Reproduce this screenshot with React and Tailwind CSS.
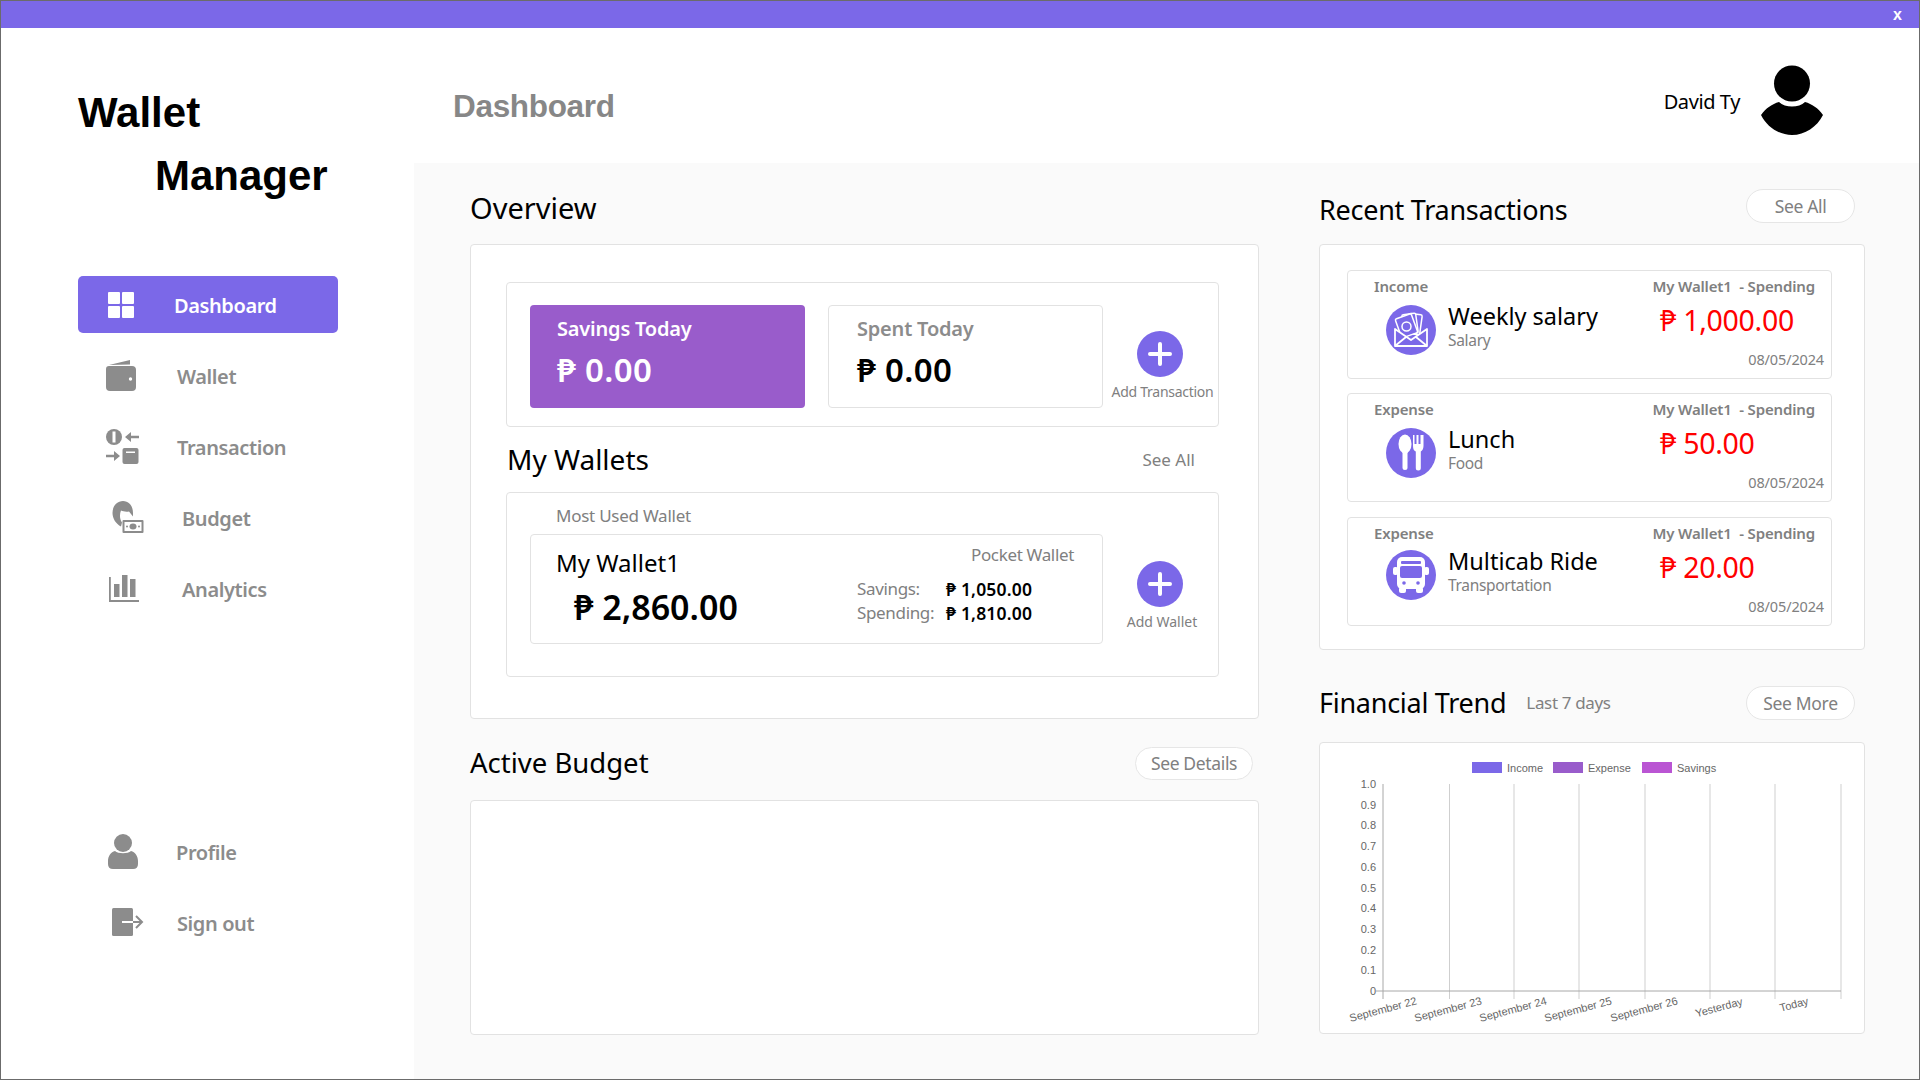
const ACCENT = 'bg-[#7b68e8]';

function GridIcon() {
  return (
    <svg width="26" height="26" viewBox="0 0 26 26" fill="#fff">
      <rect x="0" y="0" width="12" height="12" rx="1" />
      <rect x="14" y="0" width="12" height="12" rx="1" />
      <rect x="0" y="14" width="12" height="12" rx="1" />
      <rect x="14" y="14" width="12" height="12" rx="1" />
    </svg>
  );
}

function WalletIcon() {
  return (
    <svg width="30" height="31" viewBox="0 0 30 31" fill="#8c8c8c">
      <path d="M3 5 L24 0 L24 4.500 Z" />
      <path d="M3 6 H26 Q30 6 30 10 V27 Q30 31 26 31 H4 Q0 31 0 27 V9 Q0 6 3 6 Z" />
      <circle cx="24.500" cy="19" r="1.700" fill="#fff" />
    </svg>
  );
}

function TransactionIcon() {
  return (
    <svg width="33" height="35" viewBox="0 0 33 35" fill="#8c8c8c">
      <circle cx="8" cy="8" r="8" />
      <rect x="6.500" y="2.500" width="3" height="11" fill="#fff" />
      <path d="M19 8 L25 3 V6.800 H33 V9.200 H25 V13 Z" />
      <path d="M14 27 L8 22 V25.800 H0 V28.200 H8 V32 Z" />
      <rect x="16.500" y="19" width="16" height="16" rx="2" />
      <rect x="20" y="22.500" width="9" height="1.500" fill="#fff" />
    </svg>
  );
}

function BudgetIcon() {
  return (
    <svg width="32" height="33" viewBox="0 0 32 33" fill="#8c8c8c">
      <path d="M0.500 12 C0.500 5 5 0 11 0 C17 0 21 5 21 12 V15.500 L17 10.500 C14 11 11 10.500 9 9.500 C7.500 13 7.500 18 10 21.500 L9 25.500 C4 23 0.500 17.500 0.500 12 Z" />
      <rect x="10.500" y="19" width="21" height="13" rx="1" />
      <rect x="12.500" y="21" width="17" height="9" fill="#fff" />
      <ellipse cx="21" cy="25.500" rx="3.500" ry="3" />
      <circle cx="15" cy="25.500" r="1" />
      <circle cx="27" cy="25.500" r="1" />
    </svg>
  );
}

function AnalyticsIcon() {
  return (
    <svg width="30" height="27" viewBox="0 0 30 27" fill="#8c8c8c">
      <rect x="0" y="2" width="1.800" height="25" />
      <rect x="0" y="25" width="30" height="2" />
      <rect x="5" y="9" width="5.500" height="13" />
      <rect x="13" y="0" width="5.500" height="22" />
      <rect x="21" y="4" width="5.500" height="18" />
    </svg>
  );
}

function ProfileIcon() {
  return (
    <svg width="30" height="35" viewBox="0 0 30 35" fill="#8c8c8c">
      <circle cx="15" cy="9" r="9" />
      <path d="M7 17 C10 20 20 20 23 17 C27 18 30 22 30 27 V30 Q30 35 25 35 H5 Q0 35 0 30 V27 C0 22 3 18 7 17 Z" />
    </svg>
  );
}

function SignOutIcon() {
  return (
    <svg width="32" height="29" viewBox="0 0 32 29" fill="none">
      <rect x="0" y="0" width="21" height="28" rx="1.500" fill="#8c8c8c" />
      <path d="M10 14 H21" stroke="#fff" strokeWidth="2" />
      <path d="M21 14 H30 M24 8 L30 14 L24 20" stroke="#8c8c8c" strokeWidth="2" />
    </svg>
  );
}

function Avatar() {
  return (
    <svg width="62" height="70" viewBox="0 0 62 70" fill="#000">
      <circle cx="31" cy="18.500" r="18" />
      <path d="M18 37 C24 43 38 43 44 37 C51 39 57 43 62 50 C56 62 44 70 31 70 C18 70 6 62 0 50 C5 43 11 39 18 37 Z" />
    </svg>
  );
}

function SalaryIcon() {
  return (
    <svg width="50" height="50" viewBox="0 0 50 50" fill="none" stroke="#fff" strokeWidth="1.500" strokeLinejoin="round">
      <rect x="22" y="9" width="13" height="20" rx="1.500" transform="rotate(8 28 19)" />
      <rect x="17" y="9" width="14" height="20" rx="1.500" transform="rotate(-8 24 19)" fill="#7b68e8" />
      <rect x="12" y="11" width="17" height="20" rx="1.500" transform="rotate(-20 20 21)" fill="#7b68e8" />
      <circle cx="20.500" cy="21.500" r="4.500" />
      <path d="M9 24 L25 35 L41 24 V40 H9 Z" fill="#7b68e8" stroke="none" />
      <path d="M9 24 L25 35 L41 24 V41 H9 Z M9 41 L20 32 M41 41 L30 32" strokeWidth="1.800" />
    </svg>
  );
}

function FoodIcon() {
  return (
    <svg width="50" height="50" viewBox="0 0 50 50" fill="#fff">
      <ellipse cx="19" cy="16" rx="6.500" ry="9.500" />
      <rect x="16.500" y="20" width="5" height="22" rx="2.500" />
      <path d="M27 7 H28.500 V16 H30.500 V7 H32.500 V16 H34.500 V7 H36 V7 H37.500 V18 C37.500 21 36 23 34.800 23.500 V40 Q34.800 42.500 32.300 42.500 Q29.800 42.500 29.800 40 V23.500 C28 23 27 21 27 18 Z" />
    </svg>
  );
}

function BusIcon() {
  return (
    <svg width="50" height="50" viewBox="0 0 50 50" fill="#fff">
      <rect x="11" y="7" width="28" height="32" rx="5" />
      <rect x="7" y="17" width="5" height="8" rx="2" />
      <rect x="38" y="17" width="5" height="8" rx="2" />
      <rect x="13" y="37" width="7" height="6" rx="2" />
      <rect x="30" y="37" width="7" height="6" rx="2" />
      <rect x="15" y="11" width="20" height="3" rx="1" fill="#7b68e8" />
      <rect x="14" y="16" width="22" height="12" rx="2" fill="#7b68e8" />
      <circle cx="18" cy="33" r="1.800" fill="#7b68e8" />
      <circle cx="32" cy="33" r="1.800" fill="#7b68e8" />
    </svg>
  );
}

function PlusButton() {
  return (
    <div className="w-[46px] h-[46px] mr-[2px] rounded-full bg-[#7b68e8] flex items-center justify-center">
      <svg width="24" height="24" viewBox="0 0 24 24" stroke="#fff" strokeWidth="4" strokeLinecap="round">
        <path d="M12 2 V22 M2 12 H22" />
      </svg>
    </div>
  );
}

const navTop = [
  { label: 'Dashboard', icon: GridIcon, active: true, iconBox: 'ml-[30px] w-[66px]' },
  { label: 'Wallet', icon: WalletIcon, iconBox: 'ml-[28px] w-[71px]' },
  { label: 'Transaction', icon: TransactionIcon, iconBox: 'ml-[28px] w-[71px]' },
  { label: 'Budget', icon: BudgetIcon, iconBox: 'ml-[34px] w-[70px]' },
  { label: 'Analytics', icon: AnalyticsIcon, iconBox: 'ml-[31px] w-[73px]' },
];

const navBottom = [
  { label: 'Profile', icon: ProfileIcon, iconBox: 'ml-[30px] w-[68px]' },
  { label: 'Sign out', icon: SignOutIcon, iconBox: 'ml-[34px] w-[65px]' },
];

function NavItem({ item }) {
  const Icon = item.icon;
  return (
    <div className={`h-[57px] w-[260px] flex items-center rounded-[5px] text-[20px] font-semibold tracking-[-0.02em] ${item.active ? 'bg-[#7b68e8] text-white' : 'text-[#8c8c8c]'}`}>
      <div className={`shrink-0 flex items-center ${item.iconBox}`}>
        <Icon />
      </div>
      <span className="pt-[2px]">{item.label}</span>
    </div>
  );
}

function Sidebar() {
  return (
    <aside className="w-[413px] shrink-0 flex flex-col pl-[77px] pb-[128px]">
      <div className="pt-[53px] font-['Liberation_Sans',Arial,sans-serif] font-bold text-[42px] text-black">
        <div className="leading-[63px]">Wallet</div>
        <div className="leading-[63px] pl-[77px]">Manager</div>
      </div>
      <nav className="mt-[69px] flex flex-col gap-[14px]">
        {navTop.map((item) => (
          <NavItem key={item.label} item={item} />
        ))}
      </nav>
      <div className="mt-auto flex flex-col gap-[14px]">
        {navBottom.map((item) => (
          <NavItem key={item.label} item={item} />
        ))}
      </div>
    </aside>
  );
}

function Pill({ children, className }) {
  return (
    <div className={`rounded-full bg-white border border-[#e6e6e6] flex items-center justify-center text-[17.5px] text-[#808080] tracking-[-0.02em] ${className}`}>
      {children}
    </div>
  );
}

function Overview() {
  return (
    <div className="h-[475px] bg-white border border-[#e2e2e2] rounded-[4px] pl-[35px] pr-[39px] pt-[37px]">
      <div className="h-[145px] border border-[#e2e2e2] rounded-[4px] flex pl-[23px] pt-[22px]">
        <div className="w-[275px] h-[103px] rounded-[4px] bg-[#995ccb] pl-[27px] pt-[9px] text-white">
          <div className="text-[20px] font-semibold leading-[30px] tracking-[-0.01em]">Savings Today</div>
          <div className="text-[33px] font-semibold leading-[44px] mt-[4px] tracking-[0.01em]">₱ 0.00</div>
        </div>
        <div className="ml-[23px] w-[275px] h-[103px] rounded-[4px] border border-[#e2e2e2] pl-[28px] pt-[8px]">
          <div className="text-[20px] font-semibold leading-[30px] text-[#8c8c8c] tracking-[-0.01em]">Spent Today</div>
          <div className="text-[33px] font-semibold leading-[44px] mt-[4px] text-black tracking-[0.01em]">₱ 0.00</div>
        </div>
        <div className="flex-1 flex flex-col items-center pt-[26px]">
          <PlusButton />
          <div className="mt-[5px] ml-[4px] text-[14px] leading-[20px] text-[#808080] whitespace-nowrap tracking-[-0.02em]">Add Transaction</div>
        </div>
      </div>

      <div className="h-[65px] flex items-center justify-between pl-[1px] pr-[24px]">
        <h2 className="text-[28px] -mt-[2px] text-black">My Wallets</h2>
        <span className="text-[17px] text-[#808080]">See All</span>
      </div>

      <div className="h-[185px] border border-[#e2e2e2] rounded-[4px]">
        <div className="h-[41px] pl-[49px] pt-[10px] text-[17px] leading-[26px] text-[#808080] tracking-[-0.015em]">Most Used Wallet</div>
        <div className="flex pl-[23px]">
          <div className="w-[573px] h-[110px] border border-[#e2e2e2] rounded-[4px] flex">
            <div className="w-[326px] pl-[25px] pt-[11px]">
              <div className="text-[24px] leading-[34px] text-black">My Wallet1</div>
              <div className="pl-[18px] mt-[4px] text-[34px] leading-[46px] font-semibold text-black whitespace-nowrap">₱ 2,860.00</div>
            </div>
            <div className="flex-1 pr-[28px] pt-[8px]">
              <div className="text-right text-[17px] leading-[24px] text-[#808080] tracking-[-0.02em]">Pocket Wallet</div>
              <div className="mt-[10px] flex flex-col">
                <div className="flex leading-[24px]">
                  <span className="w-[89px] text-[17px] text-[#808080] tracking-[-0.02em]">Savings:</span>
                  <span className="text-[17.5px] font-semibold text-black tracking-[0.01em]">₱ 1,050.00</span>
                </div>
                <div className="flex leading-[24px]">
                  <span className="w-[89px] text-[17px] text-[#808080] tracking-[-0.02em]">Spending:</span>
                  <span className="text-[17.5px] font-semibold text-black tracking-[0.01em]">₱ 1,810.00</span>
                </div>
              </div>
            </div>
          </div>
          <div className="flex-1 flex flex-col items-center pt-[27px]">
            <PlusButton />
            <div className="mt-[5px] ml-[3px] text-[14px] leading-[20px] text-[#808080] whitespace-nowrap">Add Wallet</div>
          </div>
        </div>
      </div>
    </div>
  );
}

const transactions = [
  { kind: 'Income', title: 'Weekly salary', category: 'Salary', amount: '₱ 1,000.00', icon: SalaryIcon, gap: 'mt-[8px]' },
  { kind: 'Expense', title: 'Lunch', category: 'Food', amount: '₱ 50.00', icon: FoodIcon, gap: 'mt-[8px]' },
  { kind: 'Expense', title: 'Multicab Ride', category: 'Transportation', amount: '₱ 20.00', icon: BusIcon, gap: 'mt-[6px]' },
];

function TransactionRow({ tx }) {
  const Icon = tx.icon;
  return (
    <div className="h-[109px] last:mt-[1px] border border-[#e2e2e2] rounded-[4px]">
      <div className="flex justify-between pl-[26px] pr-[16px] pt-[4px] text-[15px] leading-[22px] font-semibold text-[#808080] tracking-[-0.01em]">
        <span>{tx.kind}</span>
        <span className="whitespace-pre">My Wallet1  - Spending</span>
      </div>
      <div className="flex">
        <div className={`w-[312px] shrink-0 flex pl-[38px] ${tx.gap}`}>
          <div className="w-[50px] h-[50px] rounded-full bg-[#7b68e8] shrink-0">
            <Icon />
          </div>
          <div className="ml-[12px] -mt-[1px]">
            <div className="text-[23.5px] leading-[24px] text-black whitespace-nowrap">{tx.title}</div>
            <div className="text-[15.5px] leading-[24px] text-[#808080] tracking-[-0.02em]">{tx.category}</div>
          </div>
        </div>
        <div className="flex-1 pr-[7px] pt-[8px]">
          <div className="text-[28.5px] leading-[30px] text-[#ff0000] tracking-[-0.01em] whitespace-nowrap">{tx.amount}</div>
          <div className="mt-[14px] text-right text-[14.5px] leading-[20px] text-[#808080] tracking-[-0.01em]">08/05/2024</div>
        </div>
      </div>
    </div>
  );
}

const yLabels = ['1.0', '0.9', '0.8', '0.7', '0.6', '0.5', '0.4', '0.3', '0.2', '0.1', '0'];
const gridX = [63, 129.500, 194, 259, 325, 390, 455, 521];
const xLabels = [
  { text: 'September 22', x: 64, y: 270 },
  { text: 'September 23', x: 129, y: 270 },
  { text: 'September 24', x: 194, y: 270 },
  { text: 'September 25', x: 259, y: 270 },
  { text: 'September 26', x: 325, y: 270 },
  { text: 'Yesterday', x: 400, y: 268 },
  { text: 'Today', x: 475, y: 265 },
];
const legend = [
  { label: 'Income', x: 152, color: '#7b68e8' },
  { label: 'Expense', x: 233, color: '#995ccb' },
  { label: 'Savings', x: 322, color: '#ba55d3' },
];

function TrendChart() {
  return (
    <svg width="544" height="290" viewBox="0 0 544 290" fontFamily="'Liberation Sans', Arial, sans-serif" fontSize="11" fill="#666">
      {legend.map((l) => (
        <g key={l.label}>
          <rect x={l.x} y="19" width="30" height="11" fill={l.color} />
          <text x={l.x + 35} y="28.500">{l.label}</text>
        </g>
      ))}
      {gridX.map((x, i) => (
        <line key={x} x1={x} x2={x} y1="41" y2="256" stroke={i === 0 ? '#a8a8a8' : '#cfcfcf'} />
      ))}
      <line x1="56" x2="521" y1="248" y2="248" stroke="#a8a8a8" />
      {yLabels.map((v, i) => (
        <text key={v} x="56" y={41 + i * 20.700 + 4} textAnchor="end">{v}</text>
      ))}
      {xLabels.map((l) => (
        <text key={l.text} x={l.x} y={l.y} textAnchor="middle" transform={`rotate(-15 ${l.x} ${l.y})`}>{l.text}</text>
      ))}
    </svg>
  );
}

export default function App() {
  return (
    <div className="w-screen h-screen flex flex-col bg-white border border-[#6b6b6b] overflow-hidden font-['Noto_Sans',sans-serif]">
      <div className={`h-[27px] shrink-0 flex items-center justify-end pr-[17px] ${ACCENT}`}>
        <span className="text-white font-bold text-[16px] leading-none font-['Liberation_Sans',sans-serif]">x</span>
      </div>
      <div className="flex flex-1 min-h-0">
        <Sidebar />
        <main className="flex-1 min-w-0 flex flex-col">
          <header className="h-[135px] shrink-0 flex justify-between pl-[39px] pr-[96px]">
            <h1 className="mt-[56px] h-[44px] leading-[44px] text-[31.5px] font-semibold text-[#878787] tracking-[-0.01em] font-['Liberation_Sans',sans-serif]">Dashboard</h1>
            <div className="flex">
              <span className="mt-[59px] h-[30px] leading-[30px] text-[20px] text-black tracking-[-0.02em]">David Ty</span>
              <div className="ml-[21px] mt-[37px]">
                <Avatar />
              </div>
            </div>
          </header>
          <div className="flex-1 min-h-0 bg-[#fafafa] flex pl-[56px]">
            <section className="w-[789px] shrink-0">
              <div className="h-[40px] mt-[26px] mb-[15px] flex items-center">
                <h2 className="text-[29px] -mt-[2px] text-black">Overview</h2>
              </div>
              <Overview />
              <div className="h-[40px] mt-[24px] mb-[17px] flex items-center justify-between pr-[6px]">
                <h2 className="text-[27.5px] text-black">Active Budget</h2>
                <Pill className="w-[118px] h-[33px]">See Details</Pill>
              </div>
              <div className="h-[235px] bg-white border border-[#e2e2e2] rounded-[4px]" />
            </section>
            <section className="ml-[60px] w-[546px] shrink-0">
              <div className="h-[40px] mt-[26px] mb-[15px] flex items-center justify-between pr-[10px]">
                <h2 className="text-[27px] mt-[2px] text-black tracking-[-0.01em]">Recent Transactions</h2>
                <Pill className="w-[109px] h-[34px] self-start">See All</Pill>
              </div>
              <div className="h-[406px] bg-white border border-[#e2e2e2] rounded-[4px] pl-[27px] pr-[32px] pt-[25px] flex flex-col gap-[14px]">
                {transactions.map((tx) => (
                  <TransactionRow key={tx.title} tx={tx} />
                ))}
              </div>
              <div className="h-[40px] mt-[33px] mb-[19px] flex items-center pr-[10px]">
                <h2 className="text-[27px] text-black tracking-[-0.01em]">Financial Trend</h2>
                <span className="ml-[20px] text-[17px] text-[#808080] tracking-[-0.02em]">Last 7 days</span>
                <Pill className="ml-auto w-[109px] h-[34px]">See More</Pill>
              </div>
              <div className="h-[292px] bg-white border border-[#e2e2e2] rounded-[4px]">
                <TrendChart />
              </div>
            </section>
          </div>
        </main>
      </div>
    </div>
  );
}
